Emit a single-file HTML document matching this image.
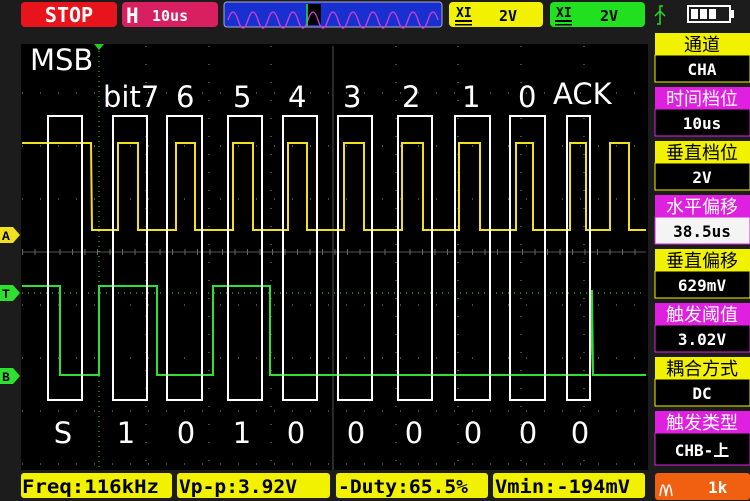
<!DOCTYPE html>
<html><head><meta charset="utf-8"><style>
body{margin:0;width:750px;height:501px;background:#1a1a1a;overflow:hidden;font-family:"Liberation Sans","Noto Sans CJK SC",sans-serif}
</style></head><body>
<svg width="750" height="501" xmlns="http://www.w3.org/2000/svg" style="position:absolute;left:0;top:0">
<rect width="750" height="501" fill="#1c1c1c"/>
<rect x="21" y="44" width="627" height="426" fill="#000"/>
<g stroke="#777" stroke-width="1.2" stroke-dasharray="1,17">
<line x1="146" y1="46" x2="146" y2="470"/><line x1="209" y1="46" x2="209" y2="470"/><line x1="271" y1="46" x2="271" y2="470"/>
<line x1="396" y1="46" x2="396" y2="470"/><line x1="458" y1="46" x2="458" y2="470"/><line x1="521" y1="46" x2="521" y2="470"/><line x1="584" y1="46" x2="584" y2="470"/>
<line x1="22" y1="93" x2="646" y2="93"/><line x1="22" y1="146" x2="646" y2="146"/><line x1="22" y1="199" x2="646" y2="199"/>
<line x1="22" y1="305" x2="646" y2="305"/><line x1="22" y1="358" x2="646" y2="358"/><line x1="22" y1="411" x2="646" y2="411"/><line x1="22" y1="464" x2="646" y2="464"/>
</g>
<line x1="22" y1="252" x2="646" y2="252" stroke="#555" stroke-width="1"/>
<line x1="22" y1="252" x2="646" y2="252" stroke="#666" stroke-width="6" stroke-dasharray="1,11.5"/>
<line x1="333" y1="46" x2="333" y2="470" stroke="#555" stroke-width="1"/>
<line x1="99" y1="46" x2="99" y2="470" stroke="#2c2" stroke-width="1.2" stroke-dasharray="1,4"/>
<line x1="22" y1="293" x2="646" y2="293" stroke="#2c2" stroke-width="1.2" stroke-dasharray="1,5"/>
<polygon points="94,44 104,44 99,50" fill="#2c2"/>
<polyline fill="none" stroke="#f0e020" stroke-width="2" points="22,143 91,143 92,230 118,230 118,143 138,143 138,230 176,230 176,143 195,143 195,230 233,230 233,143 253,143 253,230 288,230 288,143 307,143 307,230 344,230 344,143 364,143 364,230 402,230 402,143 423,143 423,230 459,230 459,143 480,143 480,230 516,230 516,143 533,143 533,230 570,230 570,143 586,143 586,230 610,230 610,143 629,143 629,230 646,230"/>
<polyline fill="none" stroke="#30e030" stroke-width="2" points="22,286 60,286 60,375 99,375 99,286 157,286 157,375 213,375 213,286 270,286 270,375 590,375 592,290 593,375 646,375"/>
<g fill="none" stroke="#fff" stroke-width="2">
<rect x="48" y="116" width="34" height="284"/><rect x="113" y="116" width="34" height="284"/><rect x="167" y="116" width="35" height="284"/>
<rect x="228" y="116" width="34" height="284"/><rect x="283" y="116" width="34" height="284"/><rect x="338" y="116" width="34" height="284"/>
<rect x="398" y="116" width="34" height="284"/><rect x="455" y="116" width="35" height="284"/><rect x="510" y="116" width="35" height="284"/>
<rect x="567" y="116" width="23" height="284"/>
</g>
<g fill="#fff" font-family="DejaVu Sans,Liberation Sans,sans-serif" font-size="29">
<text x="30" y="70">MSB</text>
<text x="103" y="107">bit7</text><text x="176" y="107">6</text><text x="233" y="107">5</text><text x="288" y="107">4</text>
<text x="343" y="107">3</text><text x="402" y="107">2</text><text x="462" y="107">1</text><text x="518" y="107">0</text><text x="553" y="104">ACK</text>
<g text-anchor="middle"><text x="63" y="443">S</text><text x="126" y="443">1</text><text x="186" y="443">0</text><text x="242" y="443">1</text><text x="296" y="443">0</text><text x="356" y="443">0</text><text x="414" y="443">0</text><text x="473" y="443">0</text><text x="528" y="443">0</text><text x="580" y="443">0</text></g>
</g>
<g font-family="Liberation Mono,monospace" font-weight="bold" font-size="13">
<polygon points="0,227 13,227 20,235 13,243 0,243" fill="#f0e020"/><text x="2" y="240">A</text>
<polygon points="0,285 13,285 20,293 13,301 0,301" fill="#30e030"/><text x="2" y="298">T</text>
<polygon points="0,368 13,368 20,376 13,384 0,384" fill="#30e030"/><text x="2" y="381">B</text>
</g>
<g font-family="DejaVu Sans Mono,Liberation Mono,monospace" font-weight="bold">
<rect x="21" y="2" width="96" height="25" rx="4" fill="#e8141c"/><text x="69" y="22" fill="#fff" font-size="20" text-anchor="middle">STOP</text>
<rect x="122" y="2" width="96" height="25" rx="4" fill="#d82060"/><text x="126" y="23" fill="#fff" font-size="21">H</text><text x="152" y="21" fill="#fff" font-size="15">10us</text>
<rect x="224" y="2" width="218" height="25" rx="3" fill="#1830d0" stroke="#aac" stroke-width="1"/>
<rect x="308" y="4" width="13" height="21" fill="#000"/>
<path d="M228,20 q5,-16 10,0 t10,0 t10,0 t10,0 t10,0 t10,0 t10,0 t10,0 t10,0 t10,0 t10,0 t10,0 t10,0 t10,0 t10,0 t10,0 t10,0 t10,0 t10,0 t10,0 t10,0" fill="none" stroke="#d040d0" stroke-width="1.3"/>
<line x1="307" y1="4" x2="307" y2="26" stroke="#2d2" stroke-width="1.5"/>
<rect x="449" y="2" width="94" height="25" rx="4" fill="#f2f200"/><text x="456" y="17" font-size="13">XI</text><rect x="455" y="20" width="17" height="2"/><rect x="455" y="24" width="17" height="1.5"/><text x="499" y="21" font-size="15">2V</text>
<rect x="550" y="2" width="95" height="25" rx="4" fill="#20e020"/><text x="556" y="17" font-size="13">XI</text><rect x="555" y="20" width="17" height="2"/><rect x="555" y="24" width="17" height="1.5"/><text x="600" y="21" font-size="15">2V</text>
<path d="M657,24 h3 v-18 h3 M655,16 l5,-5 l5,5" fill="none" stroke="#2d2" stroke-width="1.5"/>
<rect x="688" y="6" width="42" height="16" fill="none" stroke="#fff" stroke-width="2"/><rect x="730" y="10" width="4" height="8" fill="#fff"/>
<rect x="691" y="9" width="7" height="10" fill="#fff"/><rect x="700" y="9" width="7" height="10" fill="#fff"/><rect x="709" y="9" width="7" height="10" fill="#fff"/>
</g>
<g font-family="'Noto Sans CJK SC','WenQuanYi Zen Hei',sans-serif" text-anchor="middle" font-size="18">
<rect x="655" y="33" width="95" height="22" fill="#f2f200"/><text x="702" y="51" fill="#000">通道</text>
<rect x="655" y="55" width="95" height="27" fill="#000" stroke="#f2f200"/><text x="702" y="75" fill="#fff" font-family="DejaVu Sans Mono,monospace" font-weight="bold" font-size="16">CHA</text>
<rect x="655" y="87" width="95" height="22" fill="#e020e0"/><text x="702" y="105" fill="#fff">时间档位</text>
<rect x="655" y="109" width="95" height="27" fill="#000" stroke="#e020e0"/><text x="702" y="129" fill="#fff" font-family="DejaVu Sans Mono,monospace" font-weight="bold" font-size="16">10us</text>
<rect x="655" y="141" width="95" height="22" fill="#f2f200"/><text x="702" y="159" fill="#000">垂直档位</text>
<rect x="655" y="163" width="95" height="27" fill="#000" stroke="#f2f200"/><text x="702" y="183" fill="#fff" font-family="DejaVu Sans Mono,monospace" font-weight="bold" font-size="16">2V</text>
<rect x="655" y="195" width="95" height="22" fill="#e020e0"/><text x="702" y="213" fill="#fff">水平偏移</text>
<rect x="655" y="217" width="95" height="27" fill="#f4f4f4" stroke="#e020e0"/><text x="702" y="237" fill="#000" font-family="DejaVu Sans Mono,monospace" font-weight="bold" font-size="16">38.5us</text>
<rect x="655" y="249" width="95" height="22" fill="#f2f200"/><text x="702" y="267" fill="#000">垂直偏移</text>
<rect x="655" y="271" width="95" height="27" fill="#000" stroke="#f2f200"/><text x="702" y="291" fill="#fff" font-family="DejaVu Sans Mono,monospace" font-weight="bold" font-size="16">629mV</text>
<rect x="655" y="303" width="95" height="22" fill="#e020e0"/><text x="702" y="321" fill="#fff">触发阈值</text>
<rect x="655" y="325" width="95" height="27" fill="#000" stroke="#e020e0"/><text x="702" y="345" fill="#fff" font-family="DejaVu Sans Mono,monospace" font-weight="bold" font-size="16">3.02V</text>
<rect x="655" y="357" width="95" height="22" fill="#f2f200"/><text x="702" y="375" fill="#000">耦合方式</text>
<rect x="655" y="379" width="95" height="27" fill="#000" stroke="#f2f200"/><text x="702" y="399" fill="#fff" font-family="DejaVu Sans Mono,monospace" font-weight="bold" font-size="16">DC</text>
<rect x="655" y="411" width="95" height="22" fill="#e020e0"/><text x="702" y="429" fill="#fff">触发类型</text>
<rect x="655" y="433" width="95" height="32" fill="#000" stroke="#e020e0"/><text x="702" y="456" fill="#fff" font-family="DejaVu Sans Mono,'Noto Sans CJK SC',monospace" font-weight="bold" font-size="16">CHB-上</text>
</g>
<g font-family="DejaVu Sans Mono,Liberation Mono,monospace" font-weight="bold" font-size="19" fill="#000">
<rect x="21" y="473" width="151" height="25" rx="3" fill="#f2f200"/><text x="22" y="493" textLength="137" lengthAdjust="spacingAndGlyphs">Freq:116kHz</text>
<rect x="177" y="473" width="153" height="25" rx="3" fill="#f2f200"/><text x="179" y="493" textLength="118" lengthAdjust="spacingAndGlyphs">Vp-p:3.92V</text>
<rect x="336" y="473" width="152" height="25" rx="3" fill="#f2f200"/><text x="338" y="493" textLength="130" lengthAdjust="spacingAndGlyphs">-Duty:65.5%</text>
<rect x="493" y="473" width="152" height="25" rx="3" fill="#f2f200"/><text x="495" y="493" textLength="135" lengthAdjust="spacingAndGlyphs">Vmin:-194mV</text>
<rect x="655" y="473" width="95" height="27" rx="3" fill="#f06010"/>
<path d="M660,496 q3,-22 6,0 q3,-22 6,0" fill="none" stroke="#fff" stroke-width="1.5"/>
<text x="708" y="493" fill="#fff" font-size="16">1k</text>
</g>
</svg>
</body></html>
